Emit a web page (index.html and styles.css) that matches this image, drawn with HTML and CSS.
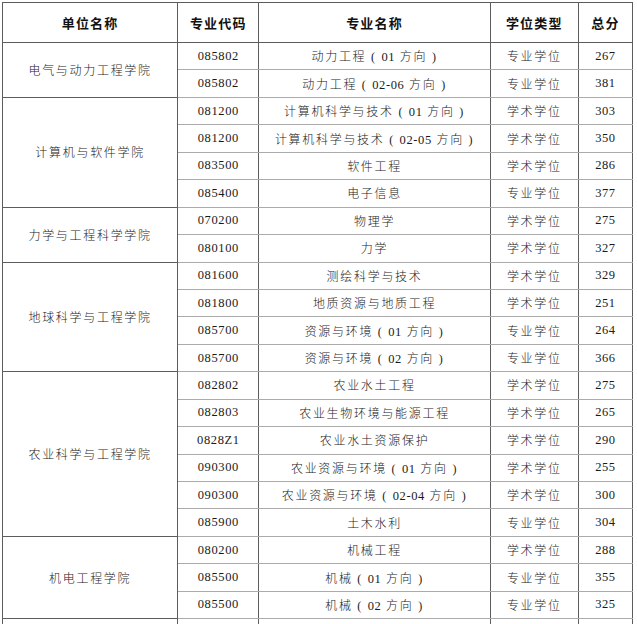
FILE: index.html
```html
<!DOCTYPE html>
<html lang="zh">
<head>
<meta charset="utf-8">
<link rel="stylesheet" href="styles.css">
</head>
<body>
<table class="score">
<colgroup>
<col class="c1"><col class="c2"><col class="c3"><col class="c4"><col class="c5">
</colgroup>
<thead>
<tr class="head"><th>单位名称</th><th>专业代码</th><th>专业名称</th><th>学位类型</th><th>总分</th></tr>
</thead>
<tbody>
<tr class="grp"><td rowspan="2" class="unit">电气与动力工程学院</td><td class="num">085802</td><td>动力工程 ( <span class="n">01</span> 方向 )</td><td>专业学位</td><td class="num">267</td></tr>
<tr><td class="num">085802</td><td>动力工程 ( <span class="n">02-06</span> 方向 )</td><td>专业学位</td><td class="num">381</td></tr>

<tr class="grp"><td rowspan="4" class="unit">计算机与软件学院</td><td class="num">081200</td><td>计算机科学与技术 ( <span class="n">01</span> 方向 )</td><td>学术学位</td><td class="num">303</td></tr>
<tr><td class="num">081200</td><td>计算机科学与技术 ( <span class="n">02-05</span> 方向 )</td><td>学术学位</td><td class="num">350</td></tr>
<tr><td class="num">083500</td><td>软件工程</td><td>学术学位</td><td class="num">286</td></tr>
<tr><td class="num">085400</td><td>电子信息</td><td>专业学位</td><td class="num">377</td></tr>

<tr class="grp"><td rowspan="2" class="unit">力学与工程科学学院</td><td class="num">070200</td><td>物理学</td><td>学术学位</td><td class="num">275</td></tr>
<tr><td class="num">080100</td><td>力学</td><td>学术学位</td><td class="num">327</td></tr>

<tr class="grp"><td rowspan="4" class="unit">地球科学与工程学院</td><td class="num">081600</td><td>测绘科学与技术</td><td>学术学位</td><td class="num">329</td></tr>
<tr><td class="num">081800</td><td>地质资源与地质工程</td><td>学术学位</td><td class="num">251</td></tr>
<tr><td class="num">085700</td><td>资源与环境 ( <span class="n">01</span> 方向 )</td><td>专业学位</td><td class="num">264</td></tr>
<tr><td class="num">085700</td><td>资源与环境 ( <span class="n">02</span> 方向 )</td><td>专业学位</td><td class="num">366</td></tr>

<tr class="grp"><td rowspan="6" class="unit">农业科学与工程学院</td><td class="num">082802</td><td>农业水土工程</td><td>学术学位</td><td class="num">275</td></tr>
<tr><td class="num">082803</td><td>农业生物环境与能源工程</td><td>学术学位</td><td class="num">265</td></tr>
<tr><td class="num">0828Z1</td><td>农业水土资源保护</td><td>学术学位</td><td class="num">290</td></tr>
<tr><td class="num">090300</td><td>农业资源与环境 ( <span class="n">01</span> 方向 )</td><td>学术学位</td><td class="num">255</td></tr>
<tr><td class="num">090300</td><td>农业资源与环境 ( <span class="n">02-04</span> 方向 )</td><td>学术学位</td><td class="num">300</td></tr>
<tr><td class="num">085900</td><td>土木水利</td><td>专业学位</td><td class="num">304</td></tr>

<tr class="grp"><td rowspan="3" class="unit">机电工程学院</td><td class="num">080200</td><td>机械工程</td><td>学术学位</td><td class="num">288</td></tr>
<tr><td class="num">085500</td><td>机械 ( <span class="n">01</span> 方向 )</td><td>专业学位</td><td class="num">355</td></tr>
<tr><td class="num">085500</td><td>机械 ( <span class="n">02</span> 方向 )</td><td>专业学位</td><td class="num">325</td></tr>

<tr class="grp"><td class="unit">&nbsp;</td><td>&nbsp;</td><td>&nbsp;</td><td>&nbsp;</td><td>&nbsp;</td></tr>
</tbody>
</table>
</body>
</html>
```

FILE: styles.css
```css
html, body {
  margin: 0;
  padding: 0;
  background: #ffffff;
}
body {
  padding: 2px 0 0 2px;
}
.score {
  border-collapse: collapse;
  table-layout: fixed;
  width: 631px;
  font-family: "Liberation Serif", "Noto Sans CJK SC", serif;
  color: #1a1a1a;
}
.c1 { width: 175px; }
.c2 { width: 81px; }
.c3 { width: 231px; }
.c4 { width: 88px; }
.c5 { width: 54px; }

.score th,
.score td {
  border-left: 1px solid #5c5c5c;
  border-right: 1px solid #5c5c5c;
  border-top: 1px solid #ababab;
  border-bottom: 1px solid #ababab;
  padding: 0;
  text-align: center;
  vertical-align: middle;
  white-space: nowrap;
  overflow: hidden;
}
.score th {
  height: 39px;
  font-size: 13px;
  font-weight: bold;
  letter-spacing: 1.2px;
  border-top: 1px solid #5c5c5c;
  border-bottom: 1px solid #5c5c5c;
  color: #111;
}
.score td {
  height: 26.45px;
  font-size: 12px;
  letter-spacing: 1.7px;
  font-weight: 300;
}
.score td.num,
.score .n {
  font-size: 12.5px;
  letter-spacing: 0.6px;
}
.score tr.grp td {
  border-top: 1px solid #5c5c5c;
}
.score td.unit {
  border-bottom: 1px solid #5c5c5c;
}
```
